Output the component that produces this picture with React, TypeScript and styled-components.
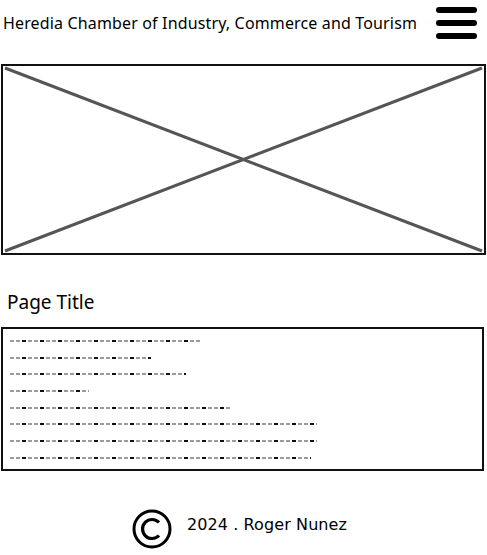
import React from 'react';
import styled, { createGlobalStyle } from 'styled-components';

const GlobalStyle = createGlobalStyle`
  html, body {
    margin: 0;
    padding: 0;
    background: #fff;
    font-family: 'Noto Sans', 'DejaVu Sans', sans-serif;
    color: #000;
  }
`;

const Page = styled.div`
  width: 487px;
  display: flex;
  flex-direction: column;
`;

const Header = styled.header`
  height: 50px;
  display: flex;
  align-items: flex-start;
  justify-content: space-between;
  padding: 0 10px 0 3px;
  box-sizing: border-box;
`;

const SiteName = styled.h1`
  margin: 12px 0 0 0;
  font-size: 16px;
  font-weight: 400;
  line-height: 22px;
  letter-spacing: 0.15px;
`;

const Burger = styled.button`
  margin-top: 7px;
  width: 41px;
  padding: 0;
  border: none;
  background: none;
  display: flex;
  flex-direction: column;
  gap: 7px;
`;

const BurgerBar = styled.span`
  display: block;
  height: 6px;
  border-radius: 3px;
  background: #000;
`;

const Hero = styled.div`
  margin: 14px 1px 0 1px;
  height: 191px;
  border: 2px solid #111;
  box-sizing: border-box;
  svg {
    display: block;
    width: 100%;
    height: 100%;
  }
`;

const PageTitle = styled.h2`
  margin: 35px 0 0 7px;
  font-size: 19px;
  font-weight: 400;
  line-height: 24px;
`;

const TextBox = styled.div`
  margin: 13px 3px 0 1px;
  height: 144px;
  border: 2px solid #111;
  box-sizing: border-box;
  padding: 11px 0 0 7px;
  display: flex;
  flex-direction: column;
  gap: 14.7px;
`;

const DashLine = styled.div<{ $w: number }>`
  width: ${p => p.$w}px;
  height: 2px;
  background: repeating-linear-gradient(
    to right,
    #9a9aa4 0 4px,
    transparent 4px 6px,
    #9a9aa4 6px 10px,
    transparent 10px 12px,
    #111 12px 16px,
    transparent 16px 18px
  );
`;

const Footer = styled.footer`
  margin-top: 38px;
  display: flex;
  align-items: center;
  justify-content: center;
  gap: 15px;
  padding-right: 8px;
`;

const FooterText = styled.span`
  font-family: 'DejaVu Sans', sans-serif;
  font-size: 16px;
  letter-spacing: 0.1px;
  margin-top: -10px;
`;

const lines = [192, 141, 176, 79, 221, 307, 307, 301];

export default function App() {
  return (
    <Page>
      <GlobalStyle />
      <Header>
        <SiteName>Heredia Chamber of Industry, Commerce and Tourism</SiteName>
        <Burger aria-label="menu">
          <BurgerBar />
          <BurgerBar />
          <BurgerBar />
        </Burger>
      </Header>
      <Hero>
        <svg viewBox="0 0 482 187" preserveAspectRatio="none">
          <line x1="2" y1="2" x2="480" y2="185" stroke="#555" strokeWidth="3" />
          <line x1="2" y1="185" x2="480" y2="2" stroke="#555" strokeWidth="3" />
        </svg>
      </Hero>
      <PageTitle>Page Title</PageTitle>
      <TextBox>
        {lines.map((w, i) => (
          <DashLine key={i} $w={w} />
        ))}
      </TextBox>
      <Footer>
        <svg width="40" height="40" viewBox="0 0 40 40">
          <circle cx="20" cy="20" r="18" fill="none" stroke="#000" strokeWidth="3" />
          <path d="M27 13.5 A9.5 9.5 0 1 0 27 26.5" fill="none" stroke="#000" strokeWidth="3.2" />
        </svg>
        <FooterText>2024 . Roger Nunez</FooterText>
      </Footer>
    </Page>
  );
}
